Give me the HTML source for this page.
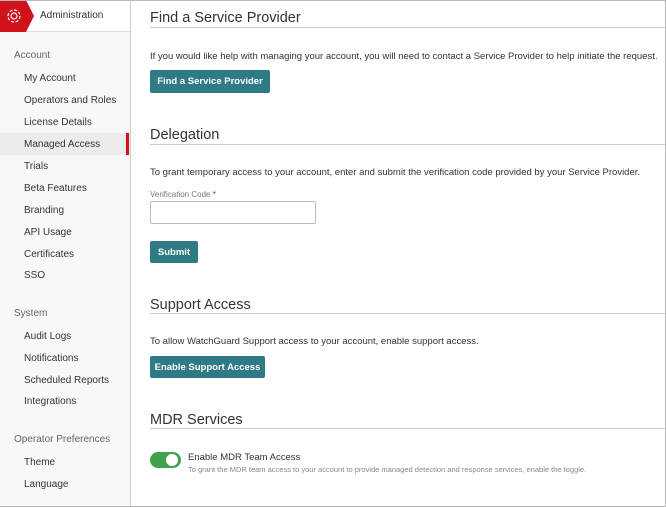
<!DOCTYPE html><html><head><style>
*{margin:0;padding:0;box-sizing:border-box}
body{width:666px;height:507px;overflow:hidden;background:#fff;font-family:"Liberation Sans",sans-serif;color:#333;position:relative}
.frame{position:absolute;left:0;top:0;width:666px;height:507px;border:1px solid #b8b8b8;border-left:none}
.side{position:absolute;left:0;top:0;width:131px;height:506px;background:#f8f8f8;border-right:1px solid #ccc}
.hdr{position:absolute;left:0;top:0;width:130px;height:32px;background:#fff;border-bottom:1px solid #ddd}
.t{position:absolute;font-size:10px;white-space:nowrap}
.sec{left:14px;color:#666}
.it{left:24px;color:#333}
h2{position:absolute;left:150px;font-weight:normal;font-size:14.5px;color:#333;white-space:nowrap}
.ln{position:absolute;left:150px;right:1px;height:1px;background:#ccc}
.btn{position:absolute;left:150px;background:#2e7a85;color:#fff;font-size:9.5px;font-weight:bold;display:flex;align-items:center;justify-content:center;border-radius:2px}
</style></head><body>
<div class="side">
<div class="hdr">
<svg style="position:absolute;left:0;top:0" width="36" height="32"><polygon points="0,0 26,0 34,16 26,32 0,32" fill="#d0121a"/>
<circle cx="14" cy="16" r="3" fill="none" stroke="#fff" stroke-width="1.2"/><circle cx="14" cy="16" r="6" fill="none" stroke="#fff" stroke-width="1.2" stroke-dasharray="3 1.7"/></svg>
<div class="t" style="left:40px;top:10px;color:#333">Administration</div></div>
<div style="position:absolute;left:0;top:133px;width:130px;height:22px;background:#ececec"></div>
<div style="position:absolute;left:126px;top:133px;width:3px;height:22px;background:#d0121a"></div>
<div class="t sec" style="top:50px">Account</div>
<div class="t it" style="top:73px">My Account</div>
<div class="t it" style="top:95px">Operators and Roles</div>
<div class="t it" style="top:117px">License Details</div>
<div class="t it" style="top:139px">Managed Access</div>
<div class="t it" style="top:161px">Trials</div>
<div class="t it" style="top:183px">Beta Features</div>
<div class="t it" style="top:205px">Branding</div>
<div class="t it" style="top:227px">API Usage</div>
<div class="t it" style="top:249px">Certificates</div>
<div class="t it" style="top:270px">SSO</div>
<div class="t sec" style="top:308px">System</div>
<div class="t it" style="top:331px">Audit Logs</div>
<div class="t it" style="top:353px">Notifications</div>
<div class="t it" style="top:375px">Scheduled Reports</div>
<div class="t it" style="top:396px">Integrations</div>
<div class="t sec" style="top:434px">Operator Preferences</div>
<div class="t it" style="top:457px">Theme</div>
<div class="t it" style="top:479px">Language</div>
</div>
<h2 style="top:10px">Find a Service Provider</h2><div class="ln" style="top:27px"></div>
<div class="t" style="left:150px;top:51px;font-size:9.5px">If you would like help with managing your account, you will need to contact a Service Provider to help initiate the request.</div>
<div class="btn" style="top:70px;width:120px;height:23px">Find a Service Provider</div>
<h2 style="top:127px">Delegation</h2><div class="ln" style="top:144px"></div>
<div class="t" style="left:150px;top:167px;font-size:9.5px">To grant temporary access to your account, enter and submit the verification code provided by your Service Provider.</div>
<div class="t" style="left:150px;top:190px;font-size:8px;color:#777">Verification Code <span style="color:#d0121a">*</span></div>
<div style="position:absolute;left:150px;top:201px;width:166px;height:23px;border:1px solid #bbb;border-radius:2px;background:#fff"></div>
<div class="btn" style="top:241px;width:48px;height:22px">Submit</div>
<h2 style="top:297px">Support Access</h2><div class="ln" style="top:313px"></div>
<div class="t" style="left:150px;top:336px;font-size:9.5px">To allow WatchGuard Support access to your account, enable support access.</div>
<div class="btn" style="top:356px;width:115px;height:22px">Enable Support Access</div>
<h2 style="top:412px">MDR Services</h2><div class="ln" style="top:428px"></div>
<div style="position:absolute;left:150px;top:452px;width:31px;height:16px;border-radius:8px;background:#3fa34d"></div>
<div style="position:absolute;left:166px;top:454px;width:12px;height:12px;border-radius:6px;background:#fff"></div>
<div class="t" style="left:188px;top:452px;font-size:9.5px">Enable MDR Team Access</div>
<div class="t" style="left:188px;top:465px;font-size:7.5px;color:#888">To grant the MDR team access to your account to provide managed detection and response services, enable the toggle.</div>
<div class="frame"></div>
</body></html>
